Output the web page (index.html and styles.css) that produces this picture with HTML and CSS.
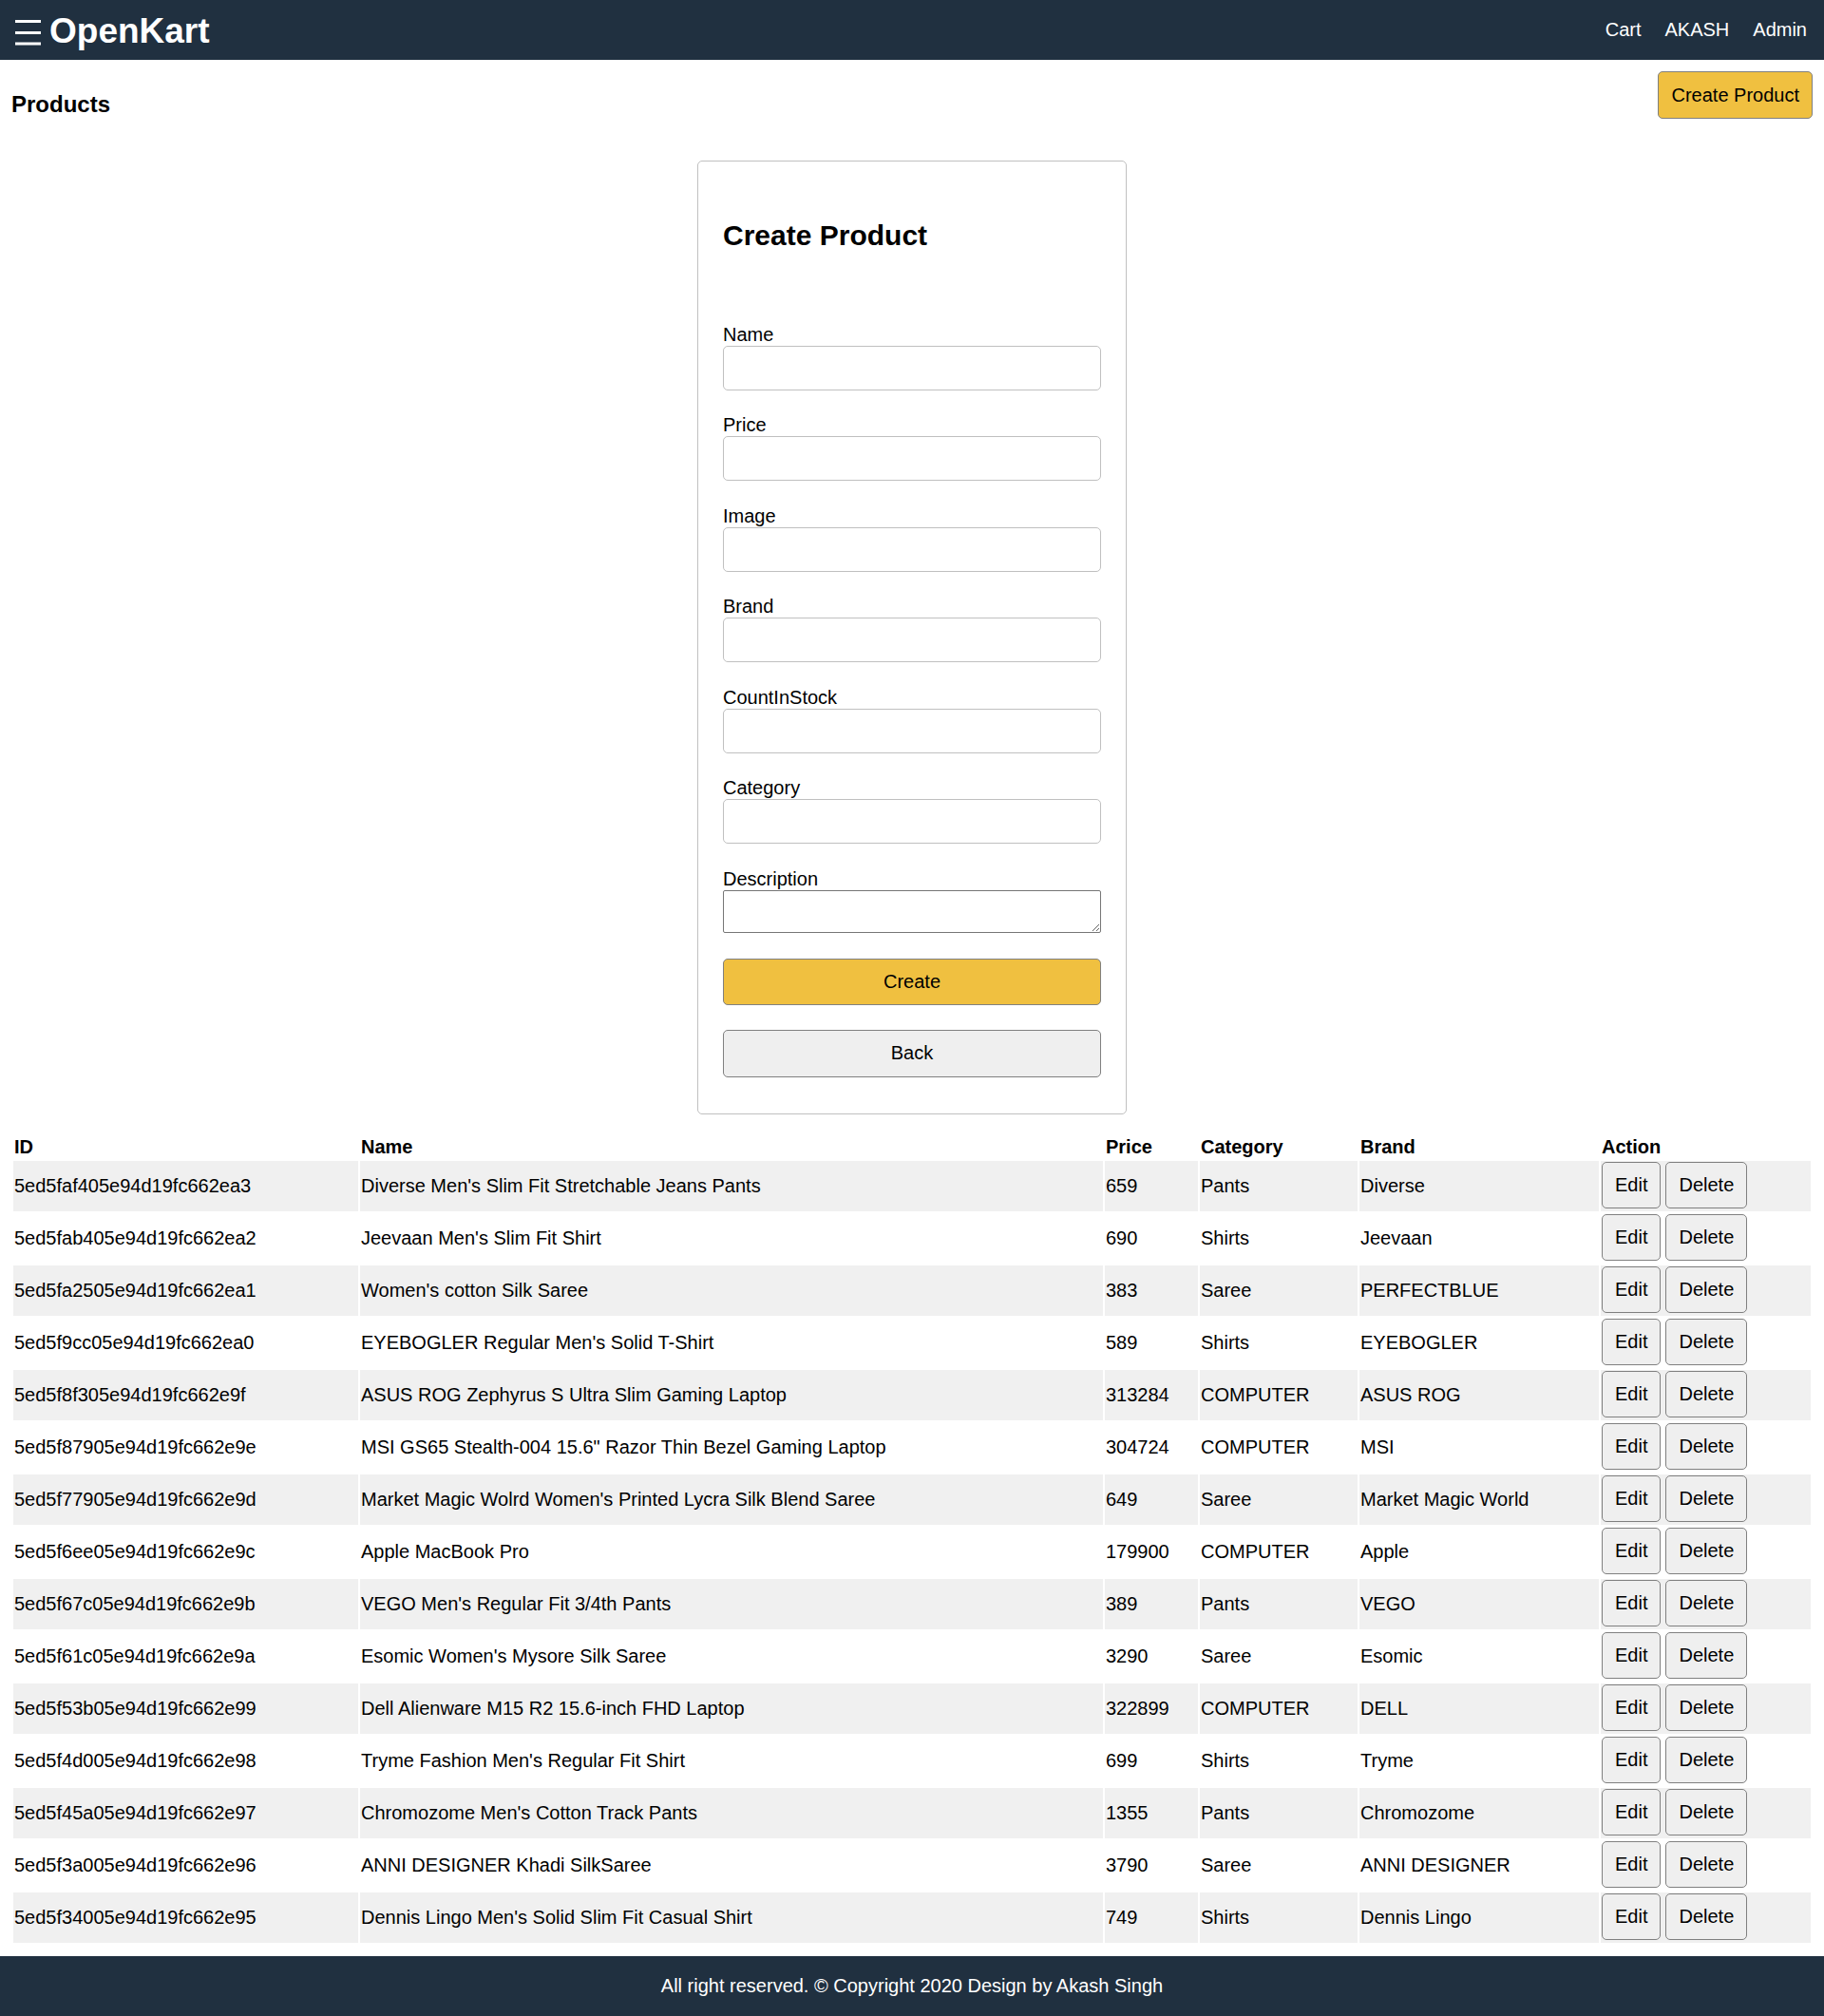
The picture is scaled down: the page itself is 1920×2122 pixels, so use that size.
FILE: index.html
```html
<!DOCTYPE html>
<html lang="en">
<head>
<meta charset="utf-8">
<title>OpenKart</title>
<link rel="stylesheet" href="styles.css">
</head>
<body>
<header class="header">
  <div class="brand">
    <svg class="menu-icon" width="27" height="27" viewBox="0 0 27 27" aria-hidden="true">
      <rect x="0" y="0" width="27" height="3" fill="#fff"/>
      <rect x="0" y="12" width="27" height="3" fill="#fff"/>
      <rect x="0" y="23.5" width="27" height="3" fill="#fff"/>
    </svg>
    <a href="#" class="logo">OpenKart</a>
  </div>
  <nav class="header-links">
    <a href="#">Cart</a>
    <a href="#">AKASH</a>
    <a href="#">Admin</a>
  </nav>
</header>

<main class="content">
  <div class="product-header">
    <h3>Products</h3>
    <button class="button primary">Create Product</button>
  </div>

  <form class="form-container">
    <h2>Create Product</h2>
    <div class="field"><label for="name">Name</label><input id="name" type="text"></div>
    <div class="field"><label for="price">Price</label><input id="price" type="text"></div>
    <div class="field"><label for="image">Image</label><input id="image" type="text"></div>
    <div class="field"><label for="brand">Brand</label><input id="brand" type="text"></div>
    <div class="field"><label for="stock">CountInStock</label><input id="stock" type="text"></div>
    <div class="field"><label for="category">Category</label><input id="category" type="text"></div>
    <div class="field"><label for="description">Description</label><textarea id="description"></textarea></div>
    <button type="button" class="button primary full">Create</button>
    <button type="button" class="button secondary full">Back</button>
  </form>

  <table class="table">
    <colgroup>
      <col class="c-id"><col class="c-name"><col class="c-price"><col class="c-cat"><col class="c-brand"><col class="c-action">
    </colgroup>
    <thead>
      <tr><th>ID</th><th>Name</th><th>Price</th><th>Category</th><th>Brand</th><th>Action</th></tr>
    </thead>
    <tbody>
      <tr><td>5ed5faf405e94d19fc662ea3</td><td>Diverse Men's Slim Fit Stretchable Jeans Pants</td><td>659</td><td>Pants</td><td>Diverse</td><td><div class="row-actions"><button class="button">Edit</button><button class="button">Delete</button></div></td></tr>
      <tr><td>5ed5fab405e94d19fc662ea2</td><td>Jeevaan Men's Slim Fit Shirt</td><td>690</td><td>Shirts</td><td>Jeevaan</td><td><div class="row-actions"><button class="button">Edit</button><button class="button">Delete</button></div></td></tr>
      <tr><td>5ed5fa2505e94d19fc662ea1</td><td>Women's cotton Silk Saree</td><td>383</td><td>Saree</td><td>PERFECTBLUE</td><td><div class="row-actions"><button class="button">Edit</button><button class="button">Delete</button></div></td></tr>
      <tr><td>5ed5f9cc05e94d19fc662ea0</td><td>EYEBOGLER Regular Men's Solid T-Shirt</td><td>589</td><td>Shirts</td><td>EYEBOGLER</td><td><div class="row-actions"><button class="button">Edit</button><button class="button">Delete</button></div></td></tr>
      <tr><td>5ed5f8f305e94d19fc662e9f</td><td>ASUS ROG Zephyrus S Ultra Slim Gaming Laptop</td><td>313284</td><td>COMPUTER</td><td>ASUS ROG</td><td><div class="row-actions"><button class="button">Edit</button><button class="button">Delete</button></div></td></tr>
      <tr><td>5ed5f87905e94d19fc662e9e</td><td>MSI GS65 Stealth-004 15.6" Razor Thin Bezel Gaming Laptop</td><td>304724</td><td>COMPUTER</td><td>MSI</td><td><div class="row-actions"><button class="button">Edit</button><button class="button">Delete</button></div></td></tr>
      <tr><td>5ed5f77905e94d19fc662e9d</td><td>Market Magic Wolrd Women's Printed Lycra Silk Blend Saree</td><td>649</td><td>Saree</td><td>Market Magic World</td><td><div class="row-actions"><button class="button">Edit</button><button class="button">Delete</button></div></td></tr>
      <tr><td>5ed5f6ee05e94d19fc662e9c</td><td>Apple MacBook Pro</td><td>179900</td><td>COMPUTER</td><td>Apple</td><td><div class="row-actions"><button class="button">Edit</button><button class="button">Delete</button></div></td></tr>
      <tr><td>5ed5f67c05e94d19fc662e9b</td><td>VEGO Men's Regular Fit 3/4th Pants</td><td>389</td><td>Pants</td><td>VEGO</td><td><div class="row-actions"><button class="button">Edit</button><button class="button">Delete</button></div></td></tr>
      <tr><td>5ed5f61c05e94d19fc662e9a</td><td>Esomic Women's Mysore Silk Saree</td><td>3290</td><td>Saree</td><td>Esomic</td><td><div class="row-actions"><button class="button">Edit</button><button class="button">Delete</button></div></td></tr>
      <tr><td>5ed5f53b05e94d19fc662e99</td><td>Dell Alienware M15 R2 15.6-inch FHD Laptop</td><td>322899</td><td>COMPUTER</td><td>DELL</td><td><div class="row-actions"><button class="button">Edit</button><button class="button">Delete</button></div></td></tr>
      <tr><td>5ed5f4d005e94d19fc662e98</td><td>Tryme Fashion Men's Regular Fit Shirt</td><td>699</td><td>Shirts</td><td>Tryme</td><td><div class="row-actions"><button class="button">Edit</button><button class="button">Delete</button></div></td></tr>
      <tr><td>5ed5f45a05e94d19fc662e97</td><td>Chromozome Men's Cotton Track Pants</td><td>1355</td><td>Pants</td><td>Chromozome</td><td><div class="row-actions"><button class="button">Edit</button><button class="button">Delete</button></div></td></tr>
      <tr><td>5ed5f3a005e94d19fc662e96</td><td>ANNI DESIGNER Khadi SilkSaree</td><td>3790</td><td>Saree</td><td>ANNI DESIGNER</td><td><div class="row-actions"><button class="button">Edit</button><button class="button">Delete</button></div></td></tr>
      <tr><td>5ed5f34005e94d19fc662e95</td><td>Dennis Lingo Men's Solid Slim Fit Casual Shirt</td><td>749</td><td>Shirts</td><td>Dennis Lingo</td><td><div class="row-actions"><button class="button">Edit</button><button class="button">Delete</button></div></td></tr>
    </tbody>
  </table>
</main>

<footer class="footer">All right reserved. © Copyright 2020 Design by Akash Singh</footer>
</body>
</html>
```

FILE: styles.css
```css
* {
  box-sizing: border-box;
}

html,
body {
  margin: 0;
  padding: 0;
}

body {
  font-family: "Liberation Sans", Arial, Helvetica, sans-serif;
  font-size: 20px;
  color: #000;
  background: #fff;
}

/* Header */
.header {
  height: 63px;
  background: #203040;
  display: flex;
  justify-content: space-between;
  align-items: center;
  padding: 0 18px 0 16px;
}

.brand {
  display: flex;
  align-items: center;
}

.menu-icon {
  display: block;
  margin-top: 5px;
}

.logo {
  color: #fff;
  font-weight: bold;
  font-size: 37px;
  text-decoration: none;
  margin-left: 9px;
  margin-top: 2px;
}

.header-links {
  display: flex;
  gap: 25px;
}

.header-links a {
  color: #fff;
  text-decoration: none;
  font-size: 20px;
}

/* Main content */
.content {
  padding: 12px 12px 12px;
}

.product-header {
  display: flex;
  justify-content: space-between;
  align-items: flex-start;
}

.product-header h3 {
  margin: 21px 0 0;
  font-size: 24px;
  font-weight: bold;
}

/* Buttons */
.button {
  font-family: inherit;
  font-size: 20px;
  color: #000;
  height: 49px;
  padding: 0 13px;
  border: 1px solid #808080;
  border-radius: 5px;
  background: #efefef;
  cursor: pointer;
}

.product-header .button {
  height: 50px;
}

.button.primary {
  background: #f0c040;
}

.button.secondary {
  background: #efefef;
}

.button.full {
  display: block;
  width: 100%;
  margin-top: 26px;
}

.button.primary.full {
  margin-top: 27px;
}

.button.secondary.full {
  height: 50px;
}

/* Form */
.form-container {
  width: 452px;
  margin: 44px auto 0;
  padding: 26px 26px 38px;
  border: 1px solid #c0c0c0;
  border-radius: 5px;
}

.form-container h2 {
  font-size: 30px;
  font-weight: bold;
  margin: 34.5px 0 76px;
}

.field {
  margin-bottom: 25.5px;
}

.field:nth-last-of-type(1) {
  margin-bottom: 0;
}

.field label {
  display: block;
  line-height: 23px;
}

.field input {
  display: block;
  width: 100%;
  height: 47px;
  padding: 0 10px;
  font-family: inherit;
  font-size: 20px;
  border: 1px solid #c0c0c0;
  border-radius: 5px;
}

.field textarea {
  display: block;
  width: 100%;
  height: 45px;
  font-family: inherit;
  font-size: 20px;
  border: 1px solid #767676;
  border-radius: 2px;
  padding: 2px;
}

/* Table */
.table {
  width: 100%;
  margin-top: 20px;
  table-layout: fixed;
  border-collapse: separate;
  border-spacing: 2px;
}

.c-id { width: 363px; }
.c-name { width: 782px; }
.c-price { width: 98px; }
.c-cat { width: 166px; }
.c-brand { width: 252px; }
.c-action { width: 221px; }

.table th {
  text-align: left;
  font-weight: bold;
  padding: 1px;
  line-height: normal;
}

.table td {
  padding: 1px;
  vertical-align: middle;
  white-space: nowrap;
}

.table tbody tr:nth-child(odd) {
  background: #f0f0f0;
}

.row-actions {
  display: flex;
  align-items: flex-start;
  gap: 5px;
  height: 51px;
}

/* Footer */
.footer {
  height: 63px;
  background: #203040;
  color: #fff;
  display: flex;
  align-items: center;
  justify-content: center;
  font-size: 20px;
}
```
